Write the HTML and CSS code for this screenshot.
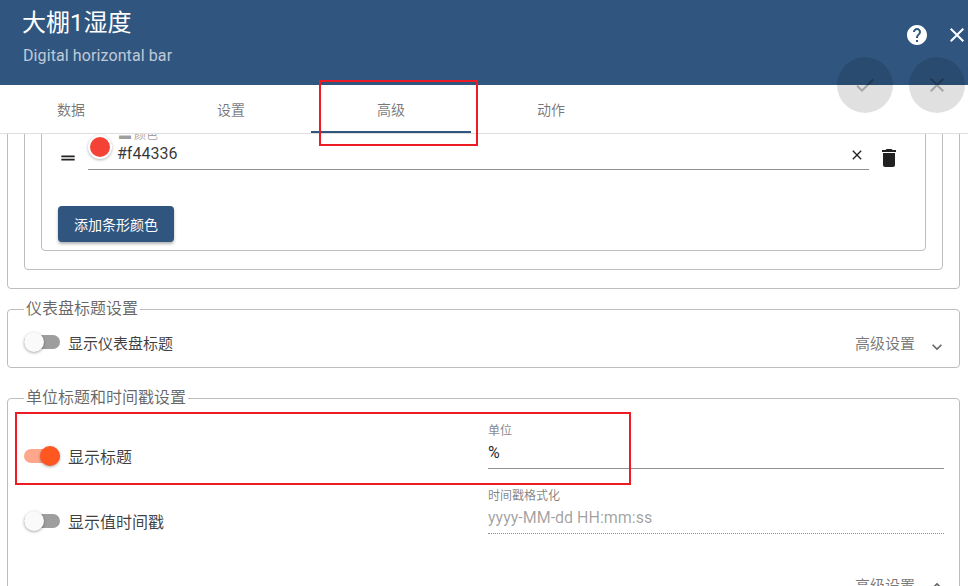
FILE: index.html
```html
<!DOCTYPE html>
<html lang="zh-CN">
<head>
    <meta charset="UTF-8">
    <title>大棚1湿度</title>
    <link rel="stylesheet" href="styles.css">
</head>
<body>
    <div class="dialog">
        <div class="header">
            <div class="heading">
                <h1>大棚1湿度</h1>
                <p>Digital horizontal bar</p>
            </div>
            <div class="header-tools">
                <svg class="icon" viewBox="0 0 24 24"><path d="M12 2C6.48 2 2 6.48 2 12s4.48 10 10 10 10-4.48 10-10S17.52 2 12 2zm1 17h-2v-2h2v2zm2.07-7.75l-.9.92C13.45 12.9 13 13.5 13 15h-2v-.5c0-1.1.45-2.1 1.17-2.83l1.24-1.26c.37-.36.59-.86.59-1.41 0-1.1-.9-2-2-2s-2 .9-2 2H8c0-2.21 1.79-4 4-4s4 1.79 4 4c0 .88-.36 1.68-.93 2.25z"/></svg>
                <svg class="icon" viewBox="0 0 24 24"><path d="M19 6.41L17.59 5 12 10.59 6.41 5 5 6.41 10.59 12 5 17.59 6.41 19 12 13.41 17.59 19 19 17.59 13.41 12z"/></svg>
            </div>
        </div>

        <div class="tabs">
            <div class="tab">数据</div>
            <div class="tab">设置</div>
            <div class="tab active">高级</div>
            <div class="tab">动作</div>
        </div>

        <div class="content">
            <div class="box outer">
                <div class="box middle">
                    <div class="box inner">
                        <div class="color-row">
                            <svg class="icon drag" viewBox="0 0 24 24"><path d="M20 9H4v2h16V9zM4 15h16v-2H4v2z"/></svg>
                            <div class="color-field">
                                <span class="swatch"></span>
                                <div class="color-text">
                                    <label>▬ 颜色</label>
                                    <div class="color-value">#f44336</div>
                                </div>
                                <svg class="icon clear" viewBox="0 0 24 24"><path d="M19 6.41L17.59 5 12 10.59 6.41 5 5 6.41 10.59 12 5 17.59 6.41 19 12 13.41 17.59 19 19 17.59 13.41 12z"/></svg>
                            </div>
                            <svg class="icon trash" viewBox="0 0 24 24"><path d="M6 19c0 1.1.9 2 2 2h8c1.1 0 2-.9 2-2V7H6v12zM19 4h-3.5l-1-1h-5l-1 1H5v2h14V4z"/></svg>
                        </div>
                        <button class="add-btn">添加条形颜色</button>
                    </div>
                </div>
            </div>

            <fieldset class="group">
                <legend>仪表盘标题设置</legend>
                <div class="title-row">
                    <div class="toggle"><span class="track"></span><span class="thumb"></span></div>
                    <span class="toggle-label small">显示仪表盘标题</span>
                    <span class="more">高级设置</span>
                    <svg class="icon chevron" viewBox="0 0 24 24"><path d="M16.59 8.59L12 13.17 7.41 8.59 6 10l6 6 6-6z"/></svg>
                </div>
            </fieldset>

            <fieldset class="group last">
                <legend>单位标题和时间戳设置</legend>
                <div class="form-grid">
                    <div class="switch-cell">
                        <div class="toggle on"><span class="track"></span><span class="thumb"></span></div>
                        <span class="toggle-label">显示标题</span>
                    </div>
                    <div class="field">
                        <label>单位</label>
                        <div class="value">%</div>
                    </div>
                    <div class="switch-cell">
                        <div class="toggle"><span class="track"></span><span class="thumb"></span></div>
                        <span class="toggle-label">显示值时间戳</span>
                    </div>
                    <div class="field disabled">
                        <label>时间戳格式化</label>
                        <div class="value">yyyy-MM-dd HH:mm:ss</div>
                    </div>
                </div>
                <div class="title-row end">
                    <span class="more">高级设置</span>
                    <svg class="icon chevron" viewBox="0 0 24 24"><path d="M12 8l-6 6 1.41 1.41L12 10.83l4.59 4.58L18 14z"/></svg>
                </div>
            </fieldset>
        </div>

        <!-- floating actions, half over the header -->
        <div class="fab fab-save"><svg class="icon" viewBox="0 0 24 24"><path d="M9 16.17L4.83 12l-1.42 1.41L9 19 21 7l-1.41-1.41z"/></svg></div>
        <div class="fab fab-cancel"><svg class="icon" viewBox="0 0 24 24"><path d="M19 6.41L17.59 5 12 10.59 6.41 5 5 6.41 10.59 12 5 17.59 6.41 19 12 13.41 17.59 19 19 17.59 13.41 12z"/></svg></div>

        <!-- red annotation boxes -->
        <div class="mark mark-tab"></div>
        <div class="mark mark-title"></div>
    </div>
</body>
</html>
```

FILE: styles.css
```css
* {
    box-sizing: border-box;
}

body {
    margin: 0;
    font-family: Roboto, "Noto Sans CJK SC", sans-serif;
    color: rgba(0, 0, 0, 0.87);
    background-color: #fff;
    overflow: hidden;
}

.dialog {
    position: relative;
    display: flex;
    flex-direction: column;
    width: 968px;
    height: 586px;
    overflow: hidden;
}

.icon {
    display: block;
    width: 24px;
    height: 24px;
    flex: none;
    fill: currentColor;
}

/* header */
.header {
    display: flex;
    justify-content: space-between;
    flex: none;
    height: 85px;
    padding: 5px 0 0 22px;
    background-color: #305680;
    color: #fff;
}

.heading h1 {
    margin: 0;
    font-size: 24px;
    font-weight: 400;
    line-height: 36px;
}

.heading p {
    margin: 5px 0 0 1px;
    font-size: 16px;
    line-height: 20px;
    letter-spacing: 0.1px;
    color: rgba(255, 255, 255, 0.7);
}

.header-tools {
    display: flex;
    gap: 16px;
    margin: 18px -1px 0 0;
}

/* tabs */
.tabs {
    display: flex;
    flex: none;
    height: 49px;
    margin-left: -9px;
    border-bottom: 1px solid #dedede;
}

.tab {
    width: 160px;
    height: 48px;
    font-size: 14px;
    line-height: 50px;
    text-align: center;
    color: rgba(0, 0, 0, 0.54);
}

.tab.active {
    border-bottom: 2px solid #305680;
}

/* scrolled content */
.content {
    flex: 1;
    min-height: 0;
    padding: 0 8px 0 7px;
    overflow: hidden;
}

.box {
    padding: 16px;
    border: 1px solid #bdbdbd;
    border-radius: 4px;
}

.outer {
    margin-top: -60px;
    padding-bottom: 18px;
}

.middle {
    padding-bottom: 18px;
}

.inner {
    padding: 19px 16px 8px;
}

.color-row {
    display: flex;
    align-items: flex-end;
}

.drag {
    width: 20px;
    height: 20px;
    margin: 0 10px 2px 0;
}

.color-field {
    display: flex;
    align-items: flex-end;
    flex: 1;
    height: 42px;
    border-bottom: 1px solid #8f8f8f;
}

.swatch {
    flex: none;
    align-self: flex-start;
    width: 24px;
    height: 24px;
    margin: 7px 5px 0 0;
    background-color: #f44336;
    border: 2px solid #fff;
    border-radius: 50%;
    box-shadow: 0 1px 3px rgba(0, 0, 0, 0.3);
}

.color-text {
    flex: 1;
}

.color-text label {
    display: block;
    padding-left: 2px;
    font-size: 12px;
    line-height: 14px;
    color: rgba(0, 0, 0, 0.4);
}

.color-value {
    height: 27px;
    font-size: 16px;
    line-height: 24px;
    color: rgba(0, 0, 0, 0.8);
}

.clear {
    width: 16px;
    height: 16px;
    margin: 0 4px 6px 0;
}

.trash {
    margin: 0 8px 0 8px;
}

.add-btn {
    display: block;
    height: 36px;
    margin-top: 36px;
    padding: 0 16px;
    border: 0;
    border-radius: 4px;
    font-family: inherit;
    font-size: 14px;
    color: #fff;
    background-color: #305680;
    box-shadow: 0 2px 3px rgba(0, 0, 0, 0.3);
}

/* fieldset groups */
.group {
    min-width: 0;
    margin: 10px 0 0;
    padding: 0 15px 0 16px;
    border: 1px solid #bdbdbd;
    border-radius: 4px;
}

.group legend {
    padding: 0 2px;
    font-size: 16px;
    line-height: 20px;
    color: rgba(0, 0, 0, 0.6);
}

.group.last {
    height: 300px;
    margin-top: 20px;
}

.title-row {
    display: flex;
    align-items: center;
    height: 48px;
    padding-bottom: 2px;
}

.title-row.end {
    justify-content: flex-end;
    margin-top: 23px;
}

.more {
    margin-left: auto;
    font-size: 15px;
    color: rgba(0, 0, 0, 0.54);
}

.chevron {
    width: 20px;
    height: 20px;
    margin: 10px -3px 0 12px;
    color: rgba(0, 0, 0, 0.6);
}

.title-row.end .chevron {
    margin-top: 3px;
}

.toggle {
    position: relative;
    flex: none;
    width: 36px;
    height: 20px;
}

.track {
    position: absolute;
    top: 3px;
    left: 0;
    width: 36px;
    height: 14px;
    border-radius: 7px;
    background-color: #9e9e9e;
}

.thumb {
    position: absolute;
    top: 0;
    left: 0;
    width: 20px;
    height: 20px;
    border-radius: 50%;
    background-color: #fafafa;
    box-shadow: 0 1px 3px rgba(0, 0, 0, 0.35);
}

.toggle.on .track {
    background-color: #ffa78c;
}

.toggle.on .thumb {
    left: 16px;
    background-color: #ff5722;
}

.toggle-label {
    margin-left: 8px;
    font-size: 16px;
    color: rgba(0, 0, 0, 0.75);
}

.toggle-label.small {
    font-size: 15px;
}

.form-grid {
    display: grid;
    grid-template-columns: 1fr 1fr;
    column-gap: 8px;
}

.switch-cell {
    display: flex;
    align-items: center;
    height: 65px;
    padding-top: 31px;
}

.field {
    height: 65px;
    padding-top: 15px;
}

.field label {
    display: block;
    font-size: 12px;
    line-height: 16px;
    color: rgba(0, 0, 0, 0.5);
}

.field .value {
    height: 30px;
    padding-top: 4px;
    font-size: 16px;
    line-height: 20px;
    border-bottom: 1px solid #8f8f8f;
}

.field.disabled .value {
    color: rgba(0, 0, 0, 0.38);
    border-bottom: 1px dotted #8f8f8f;
}

/* floating buttons */
.fab {
    position: absolute;
    top: 57px;
    display: flex;
    align-items: center;
    justify-content: center;
    width: 56px;
    height: 56px;
    border-radius: 50%;
    color: rgba(0, 0, 0, 0.26);
    background-color: rgba(0, 0, 0, 0.12);
}

.fab-save {
    left: 837px;
}

.fab-cancel {
    left: 909px;
}

/* annotations */
.mark {
    position: absolute;
    border: 2px solid #ed1c24;
}

.mark-tab {
    top: 80px;
    left: 319px;
    width: 159px;
    height: 66px;
}

.mark-title {
    top: 412px;
    left: 15px;
    width: 616px;
    height: 73px;
}
```
